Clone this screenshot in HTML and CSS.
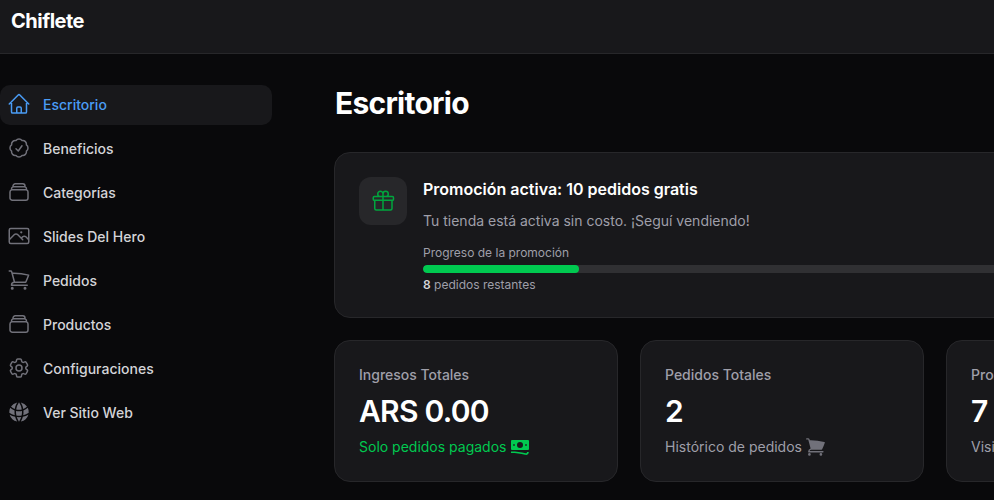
FILE: index.html
```html
<!DOCTYPE html>
<html lang="es">
<head>
    <meta charset="UTF-8">
    <meta name="viewport" content="width=device-width, initial-scale=1.0">
    <title>Chiflete - Escritorio</title>
    <link rel="stylesheet" href="styles.css">
</head>
<body>
    <!-- Top bar -->
    <header class="topbar">
        <span class="brand">Chiflete</span>
    </header>

    <div class="layout">
        <!-- Sidebar -->
        <nav class="sidebar">
            <a class="navItem active" href="#">
                <svg class="navIcon" viewBox="0 0 24 24"><path d="m2.25 12 8.954-8.955c.44-.439 1.152-.439 1.591 0L21.75 12M4.5 9.75v10.125c0 .621.504 1.125 1.125 1.125H9.75v-4.875c0-.621.504-1.125 1.125-1.125h2.25c.621 0 1.125.504 1.125 1.125V21h4.125c.621 0 1.125-.504 1.125-1.125V9.75M8.25 21h8.25"/></svg>
                Escritorio
            </a>
            <a class="navItem" href="#">
                <svg class="navIcon" viewBox="0 0 24 24"><path d="M9 12.75 11.25 15 15 9.75M21 12c0 1.268-.63 2.39-1.593 3.068a3.745 3.745 0 0 1-1.043 3.296 3.745 3.745 0 0 1-3.296 1.043A3.745 3.745 0 0 1 12 21c-1.268 0-2.39-.63-3.068-1.593a3.746 3.746 0 0 1-3.296-1.043 3.745 3.745 0 0 1-1.043-3.296A3.745 3.745 0 0 1 3 12c0-1.268.63-2.39 1.593-3.068a3.745 3.745 0 0 1 1.043-3.296 3.746 3.746 0 0 1 3.296-1.043A3.746 3.746 0 0 1 12 3c1.268 0 2.39.63 3.068 1.593a3.746 3.746 0 0 1 3.296 1.043 3.746 3.746 0 0 1 1.043 3.296A3.745 3.745 0 0 1 21 12Z"/></svg>
                Beneficios
            </a>
            <a class="navItem" href="#">
                <svg class="navIcon" viewBox="0 0 24 24"><path d="M6 6.878V6a2.25 2.25 0 0 1 2.25-2.25h7.5A2.25 2.25 0 0 1 18 6v.878m-12 0c.235-.083.487-.128.75-.128h10.5c.263 0 .515.045.75.128m-12 0A2.25 2.25 0 0 0 4.5 9v.878m13.5-3A2.25 2.25 0 0 1 19.5 9v.878m0 0a2.246 2.246 0 0 0-.75-.128H5.25c-.263 0-.515.045-.75.128m15 0A2.25 2.25 0 0 1 21 12v6a2.25 2.25 0 0 1-2.25 2.25H5.25A2.25 2.25 0 0 1 3 18v-6c0-.98.626-1.813 1.5-2.122"/></svg>
                Categorías
            </a>
            <a class="navItem" href="#">
                <svg class="navIcon" viewBox="0 0 24 24"><path d="m2.25 15.75 5.159-5.159a2.25 2.25 0 0 1 3.182 0l5.159 5.159m-1.5-1.5 1.409-1.409a2.25 2.25 0 0 1 3.182 0l2.909 2.909m-18 3.75h16.5a1.5 1.5 0 0 0 1.5-1.5V6a1.5 1.5 0 0 0-1.5-1.5H3.75A1.5 1.5 0 0 0 2.25 6v12a1.5 1.5 0 0 0 1.5 1.5Zm10.5-11.25h.008v.008h-.008V8.25Zm.375 0a.375.375 0 1 1-.75 0 .375.375 0 0 1 .75 0Z"/></svg>
                Slides Del Hero
            </a>
            <a class="navItem" href="#">
                <svg class="navIcon" viewBox="0 0 24 24"><path d="M2.25 3h1.386c.51 0 .955.343 1.087.835l.383 1.437M7.5 14.25a3 3 0 0 0-3 3h15.75m-12.75-3h11.218c1.121-2.3 2.1-4.684 2.924-7.138a60.114 60.114 0 0 0-16.536-1.84M7.5 14.25 5.106 5.272M6 20.25a.75.75 0 1 1-1.5 0 .75.75 0 0 1 1.5 0Zm12.75 0a.75.75 0 1 1-1.5 0 .75.75 0 0 1 1.5 0Z"/></svg>
                Pedidos
            </a>
            <a class="navItem" href="#">
                <svg class="navIcon" viewBox="0 0 24 24"><path d="M6 6.878V6a2.25 2.25 0 0 1 2.25-2.25h7.5A2.25 2.25 0 0 1 18 6v.878m-12 0c.235-.083.487-.128.75-.128h10.5c.263 0 .515.045.75.128m-12 0A2.25 2.25 0 0 0 4.5 9v.878m13.5-3A2.25 2.25 0 0 1 19.5 9v.878m0 0a2.246 2.246 0 0 0-.75-.128H5.25c-.263 0-.515.045-.75.128m15 0A2.25 2.25 0 0 1 21 12v6a2.25 2.25 0 0 1-2.25 2.25H5.25A2.25 2.25 0 0 1 3 18v-6c0-.98.626-1.813 1.5-2.122"/></svg>
                Productos
            </a>
            <a class="navItem" href="#">
                <svg class="navIcon" viewBox="0 0 24 24"><path d="M9.594 3.94c.09-.542.56-.94 1.11-.94h2.593c.55 0 1.02.398 1.11.94l.213 1.281c.063.374.313.686.645.87.074.04.147.083.22.127.325.196.72.257 1.075.124l1.217-.456a1.125 1.125 0 0 1 1.37.49l1.296 2.247a1.125 1.125 0 0 1-.26 1.431l-1.003.827c-.293.241-.438.613-.43.992a7.723 7.723 0 0 1 0 .255c-.008.378.137.75.43.991l1.004.827c.424.35.534.955.26 1.43l-1.298 2.247a1.125 1.125 0 0 1-1.369.491l-1.217-.456c-.355-.133-.75-.072-1.076.124a6.47 6.47 0 0 1-.22.128c-.331.183-.581.495-.644.869l-.213 1.281c-.09.543-.56.94-1.11.94h-2.594c-.55 0-1.019-.398-1.11-.94l-.213-1.281c-.062-.374-.312-.686-.644-.87a6.52 6.52 0 0 1-.22-.127c-.325-.196-.72-.257-1.076-.124l-1.217.456a1.125 1.125 0 0 1-1.369-.49l-1.297-2.247a1.125 1.125 0 0 1 .26-1.431l1.004-.827c.292-.24.437-.613.43-.991a6.932 6.932 0 0 1 0-.255c.007-.38-.138-.751-.43-.992l-1.004-.827a1.125 1.125 0 0 1-.26-1.43l1.297-2.247a1.125 1.125 0 0 1 1.37-.491l1.216.456c.356.133.751.072 1.076-.124.072-.044.146-.086.22-.128.332-.183.582-.495.644-.869l.214-1.28Z"/><path d="M15 12a3 3 0 1 1-6 0 3 3 0 0 1 6 0Z"/></svg>
                Configuraciones
            </a>
            <a class="navItem" href="#">
                <svg class="navIcon solid" viewBox="0 0 24 24"><path d="M21.721 12.752a9.711 9.711 0 0 0-.945-5.003 12.754 12.754 0 0 1-4.339 2.708 18.991 18.991 0 0 1-.214 4.772 17.165 17.165 0 0 0 5.498-2.477ZM14.634 15.55a17.324 17.324 0 0 0 .332-4.647c-.952.227-1.945.347-2.966.347-1.021 0-2.014-.12-2.966-.347a17.515 17.515 0 0 0 .332 4.647 17.385 17.385 0 0 0 5.268 0ZM9.772 17.119a18.963 18.963 0 0 0 4.456 0A17.182 17.182 0 0 1 12 21.724a17.18 17.18 0 0 1-2.228-4.605ZM7.777 15.23a18.87 18.87 0 0 1-.214-4.774 12.753 12.753 0 0 1-4.34-2.708 9.711 9.711 0 0 0-.944 5.004 17.165 17.165 0 0 0 5.498 2.477ZM21.356 14.752a9.765 9.765 0 0 1-7.478 6.817 18.64 18.64 0 0 0 1.988-4.718 18.627 18.627 0 0 0 5.49-2.098ZM2.644 14.752c1.682.971 3.53 1.688 5.49 2.099a18.64 18.64 0 0 0 1.988 4.718 9.765 9.765 0 0 1-7.478-6.816ZM13.878 2.43a9.755 9.755 0 0 1 6.116 3.986 11.267 11.267 0 0 1-3.746 2.504 18.63 18.63 0 0 0-2.37-6.49ZM12 2.276a17.152 17.152 0 0 1 2.805 7.121c-.897.23-1.837.353-2.805.353-.968 0-1.908-.122-2.805-.353A17.151 17.151 0 0 1 12 2.276ZM10.122 2.43a18.629 18.629 0 0 0-2.37 6.49 11.266 11.266 0 0 1-3.746-2.504 9.754 9.754 0 0 1 6.116-3.985Z"/></svg>
                Ver Sitio Web
            </a>
        </nav>

        <!-- Main content -->
        <main class="content">
            <h1 class="pageTitle">Escritorio</h1>

            <section class="card promoCard">
                <div class="promoIcon">
                    <svg viewBox="0 0 24 24"><path d="M21 11.25v8.25a1.5 1.5 0 0 1-1.5 1.5H5.25a1.5 1.5 0 0 1-1.5-1.5v-8.25M12 4.875A2.625 2.625 0 1 0 9.375 7.5H12m0-2.625V7.5m0-2.625A2.625 2.625 0 1 1 14.625 7.5H12m0 0V21m-8.625-9.75h18c.621 0 1.125-.504 1.125-1.125v-1.5c0-.621-.504-1.125-1.125-1.125h-18c-.621 0-1.125.504-1.125 1.125v1.5c0 .621.504 1.125 1.125 1.125Z"/></svg>
                </div>
                <div class="promoBody">
                    <h3 class="promoTitle">Promoción activa: 10 pedidos gratis</h3>
                    <p class="promoText">Tu tienda está activa sin costo. ¡Seguí vendiendo!</p>
                    <div class="progressLabel">Progreso de la promoción</div>
                    <div class="progressTrack"><div class="progressFill" style="width: 20%"></div></div>
                    <div class="progressNote"><b>8</b> pedidos restantes</div>
                </div>
            </section>

            <section class="statsGrid">
                <div class="card statCard">
                    <div class="statLabel">Ingresos Totales</div>
                    <div class="statValue">ARS 0.00</div>
                    <div class="statNote green">
                        Solo pedidos pagados
                        <svg class="noteIcon moneyIcon" viewBox="0 0 18 16"><path fill-rule="evenodd" d="M1 1h16a1 1 0 0 1 1 1v8a1 1 0 0 1-1 1H1a1 1 0 0 1-1-1V2a1 1 0 0 1 1-1Zm8 2a3 3 0 1 0 0 6 3 3 0 0 0 0-6ZM2.2 5.2v1.6h1.6V5.2H2.2Zm12 0v1.6h1.6V5.2h-1.6Z"/><path d="M0 12.5c5.5 0 10 .6 14.5 1.8 1 .2 1.5-.3 1.5-1.3h1.8c0 2-1.5 3.3-3.7 2.8C9.5 14.6 5 14 0 14Z"/></svg>
                    </div>
                </div>
                <div class="card statCard">
                    <div class="statLabel">Pedidos Totales</div>
                    <div class="statValue">2</div>
                    <div class="statNote">
                        Histórico de pedidos
                        <svg class="noteIcon cartIcon" viewBox="1.5 2 21 20"><path d="M2.25 2.25a.75.75 0 0 0 0 1.5h1.386c.17 0 .318.114.362.278l2.558 9.592a3.752 3.752 0 0 0-2.806 3.63c0 .414.336.75.75.75h15.75a.75.75 0 0 0 0-1.5H5.378A2.25 2.25 0 0 1 7.5 15h11.218a.75.75 0 0 0 .674-.421 60.358 60.358 0 0 0 2.96-7.228.75.75 0 0 0-.525-.965A60.864 60.864 0 0 0 5.68 4.509l-.232-.867A1.875 1.875 0 0 0 3.636 2.25H2.25ZM3.75 20.25a1.5 1.5 0 1 1 3 0 1.5 1.5 0 0 1-3 0ZM16.5 20.25a1.5 1.5 0 1 1 3 0 1.5 1.5 0 0 1-3 0Z"/></svg>
                    </div>
                </div>
                <div class="card statCard">
                    <div class="statLabel">Productos Activos</div>
                    <div class="statValue">7</div>
                    <div class="statNote">Visibles en tienda</div>
                </div>
            </section>
        </main>
    </div>
</body>
</html>
```

FILE: styles.css
```css
body {
    font-family: 'Inter', 'Liberation Sans', sans-serif;
    background-color: #09090b;
    color: #ffffff;
    margin: 0;
    padding: 0;
    height: 500px;
    overflow: hidden;
}
.topbar {
    height: 54px;
    background-color: #18181b;
    border-bottom: 1px solid #27272a;
    padding: 7px 11px 0;
    box-sizing: border-box;
}
.brand {
    display: block;
    font-size: 20px;
    font-weight: 700;
    line-height: 28px;
    letter-spacing: -0.5px;
}
.layout {
    display: flex;
}
.sidebar {
    width: 272px;
    flex-shrink: 0;
    padding-top: 31px;
    display: flex;
    flex-direction: column;
    gap: 4px;
}
.navItem {
    display: flex;
    align-items: center;
    gap: 12px;
    height: 40px;
    box-sizing: border-box;
    padding: 0 0 2px 7px;
    border-radius: 10px;
    font-size: 14px;
    font-weight: 500;
    color: #d4d4d8;
    text-decoration: none;
}
.navItem.active {
    background-color: #18181b;
    color: #4a9cf5;
}
.navIcon {
    width: 24px;
    height: 24px;
    flex-shrink: 0;
    fill: none;
    stroke: #71717a;
    stroke-width: 1.5;
    stroke-linecap: round;
    stroke-linejoin: round;
}
.navItem.active .navIcon {
    stroke: #4a9cf5;
}
.navIcon.solid {
    fill: #71717a;
    stroke: none;
}
.content {
    width: 896px;
    flex-shrink: 0;
    margin-left: 62px;
    padding-top: 30px;
}
.pageTitle {
    margin: 0 0 29px;
    padding-left: 1px;
    font-size: 30px;
    line-height: 39px;
    font-weight: 700;
    letter-spacing: -0.75px;
}
.card {
    background-color: #18181b;
    border: 1px solid #27272a;
    border-radius: 16px;
    box-sizing: border-box;
}
.promoCard {
    display: flex;
    gap: 16px;
    height: 166px;
    padding: 24px;
}
.promoIcon {
    width: 48px;
    height: 48px;
    flex-shrink: 0;
    display: flex;
    align-items: center;
    justify-content: center;
    background-color: #27272a;
    border-radius: 12px;
}
.promoIcon svg {
    width: 24px;
    height: 24px;
    fill: none;
    stroke: #00a63e;
    stroke-width: 1.5;
    stroke-linecap: round;
    stroke-linejoin: round;
}
.promoBody {
    flex: 1;
}
.promoTitle {
    margin: 0;
    font-size: 16px;
    line-height: 24px;
    font-weight: 600;
}
.promoText {
    margin: 10px 0 0;
    font-size: 14px;
    line-height: 20px;
    color: #9f9fa9;
}
.progressLabel {
    margin-top: 14px;
    font-size: 12px;
    line-height: 16px;
    color: #9f9fa9;
}
.progressTrack {
    height: 8px;
    margin-top: 4px;
    background-color: #303033;
    border-radius: 4px;
    overflow: hidden;
}
.progressFill {
    height: 100%;
    background-color: #00c950;
    border-radius: 4px;
}
.progressNote {
    margin-top: 4px;
    font-size: 12px;
    line-height: 16px;
    color: #9f9fa9;
}
.progressNote b {
    font-weight: 600;
    color: #d4d4d8;
}
.statsGrid {
    display: grid;
    grid-template-columns: repeat(3, 284px);
    gap: 22px;
    margin-top: 22px;
}
.statCard {
    height: 142px;
    padding: 24px;
}
.statLabel {
    font-size: 14px;
    line-height: 20px;
    font-weight: 500;
    color: #9f9fa9;
}
.statValue {
    margin-top: 8px;
    font-size: 30px;
    line-height: 36px;
    font-weight: 600;
    letter-spacing: -0.75px;
}
.statNote {
    display: flex;
    align-items: center;
    gap: 4px;
    margin-top: 8px;
    font-size: 14px;
    line-height: 20px;
    color: #9f9fa9;
}
.statNote.green {
    color: #00c950;
}
.noteIcon {
    width: 18px;
    height: 18px;
    fill: #71717a;
}
.cartIcon {
    width: 19px;
}
.moneyIcon {
    margin-left: 1px;
}
.green .noteIcon {
    fill: #00c950;
}
```
